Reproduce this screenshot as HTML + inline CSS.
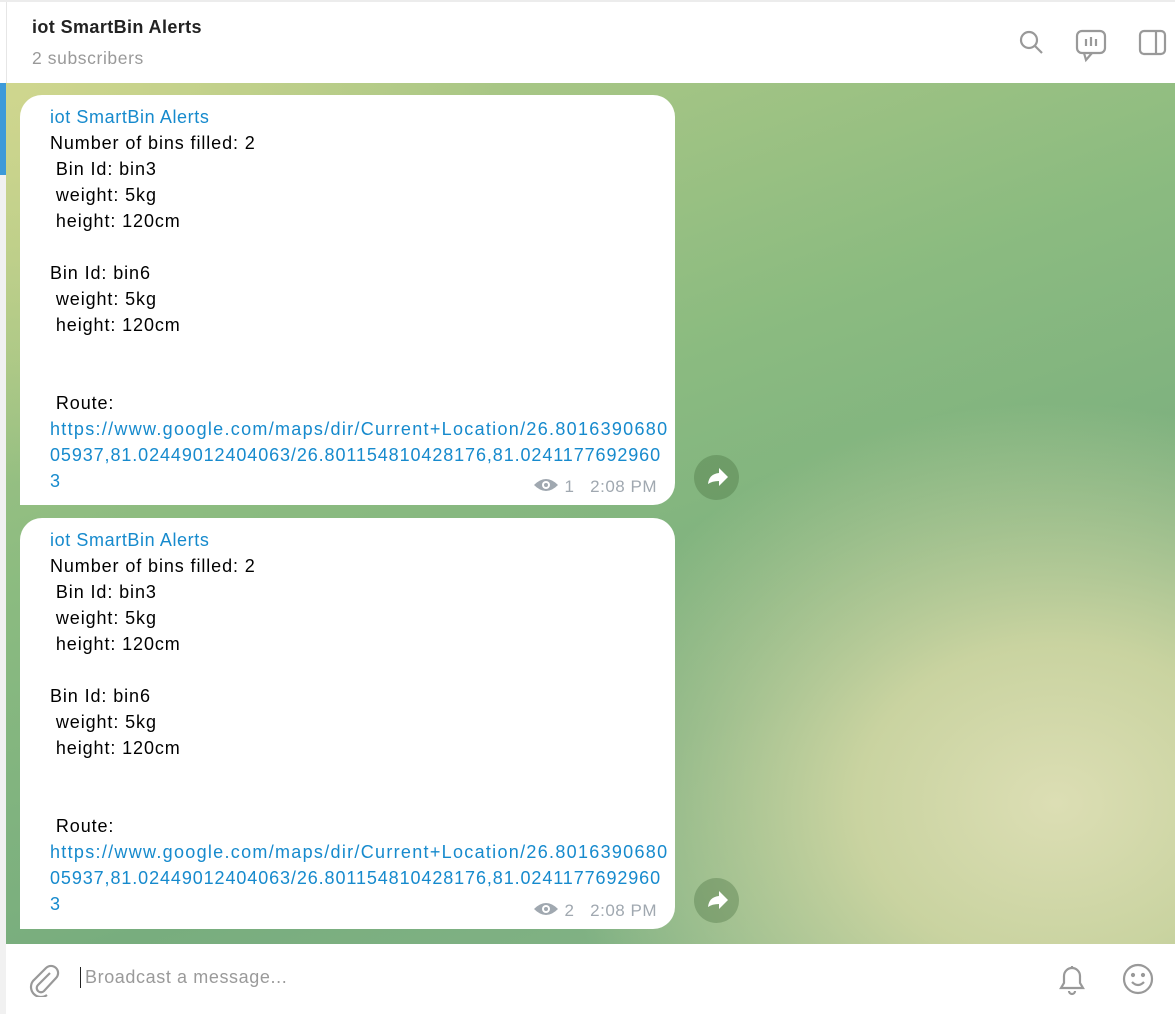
<!DOCTYPE html>
<html><head><style>
body{margin:0;width:1175px;height:1014px;overflow:hidden;font-family:"Liberation Sans",sans-serif;background:#fff;position:relative}
.top{position:absolute;left:0;top:0;width:1175px;height:2px;background:#ececec}
.hdr{position:absolute;left:6px;top:2px;width:1169px;height:81px;background:#fff;border-left:1px solid #e6e6e6}
.t1{position:absolute;left:25px;top:15px;font-size:18px;font-weight:bold;color:#222;letter-spacing:0.4px}
.t2{position:absolute;left:25px;top:46px;font-size:17.5px;color:#999;letter-spacing:0.6px}
.bg{position:absolute;left:6px;top:83px;width:1169px;height:861px;
background:radial-gradient(ellipse 500px 400px at 1050px 720px,#dcdeb4 0%,#c9d3a0 40%,rgba(160,195,140,0) 100%),
radial-gradient(ellipse 500px 400px at 0px 0px,#cfd68e 0%,rgba(180,205,130,0) 100%),
linear-gradient(160deg,#b7cc88 0%,#8bbb80 40%,#78ad7e 70%,#8ab78a 100%)}
.strip{position:absolute;left:0;top:83px;width:6px;height:92px;background:#3d9ad9}
.lstrip{position:absolute;left:0;top:175px;width:6px;height:839px;background:#f1f1f1}
.b{position:absolute;left:20px;width:655px;height:410px;background:#fff;border-radius:22px 22px 22px 0}
.b .in{position:absolute;left:30px;top:9px;font-size:18px;letter-spacing:0.9px;line-height:26px;color:#000;white-space:pre}
.b .n{color:#168acd;font-weight:normal;letter-spacing:0.6px}
.b a{color:#168acd;text-decoration:none}
.b a.l1{letter-spacing:1.3px}
.meta{position:absolute;right:18px;bottom:8px;font-size:17px;color:#a0a8b0;letter-spacing:0.5px}
.fw{position:absolute;left:694px;width:45px;height:45px;border-radius:50%;background:rgba(70,110,60,.35)}
.cmp{position:absolute;left:6px;top:944px;width:1169px;height:70px;background:#fff}
.ph{position:absolute;left:74px;top:23px;font-size:18px;color:#9a9a9a;border-left:1.5px solid #222;padding-left:4px;letter-spacing:0.6px}
</style></head><body>
<div class="top"></div>
<div class="hdr"><div class="t1">iot SmartBin Alerts</div><div class="t2">2 subscribers</div>
<svg style="position:absolute;left:1010px;top:26px" width="30" height="30" fill="none" stroke="#999" stroke-width="2.2"><circle cx="12" cy="12" r="8"/><path d="M18 18l7 7"/></svg>
<svg style="position:absolute;left:1067px;top:26px" width="34" height="36" fill="none" stroke="#999" stroke-width="2.2"><rect x="3" y="3" width="28" height="22" rx="5"/><path d="M10 25l2 7 6-7M12 11v7M17 9v9M22 11v7"/></svg>
<svg style="position:absolute;left:1130px;top:26px" width="30" height="30" fill="none" stroke="#999" stroke-width="2.2"><rect x="3" y="3" width="25" height="23" rx="4"/><path d="M19 3v23"/></svg>
</div>
<div class="strip"></div><div class="lstrip"></div>
<div class="bg"></div>
<div class="b" style="top:95px"><div class="in"><span class="n">iot SmartBin Alerts</span>
Number of bins filled: 2
 Bin Id: bin3
 weight: 5kg
 height: 120cm

Bin Id: bin6
 weight: 5kg
 height: 120cm


 Route:
<a class="l1">https://www.google.com/maps/dir/Current+Location/26.8016390680</a>
<a>05937,81.02449012404063/26.801154810428176,81.0241177692960</a>
<a>3</a></div><div class="meta"><svg width="26" height="18" style="vertical-align:-2px"><path d="M1 9Q13-3 25 9Q13 21 1 9z" fill="#a0a8b0"/><circle cx="13" cy="9" r="4" fill="#fff"/><circle cx="13" cy="9" r="2" fill="#a0a8b0"/></svg> 1&nbsp;&nbsp; 2:08 PM</div></div>
<div class="fw" style="top:455px"><svg width="45" height="45"><path d="M14 29Q15 19 25 18V13l9 9-9 9v-5Q18 26 14 29z" fill="#fff"/></svg></div>
<div class="b" style="top:518px;height:411px"><div class="in"><span class="n">iot SmartBin Alerts</span>
Number of bins filled: 2
 Bin Id: bin3
 weight: 5kg
 height: 120cm

Bin Id: bin6
 weight: 5kg
 height: 120cm


 Route:
<a class="l1">https://www.google.com/maps/dir/Current+Location/26.8016390680</a>
<a>05937,81.02449012404063/26.801154810428176,81.0241177692960</a>
<a>3</a></div><div class="meta"><svg width="26" height="18" style="vertical-align:-2px"><path d="M1 9Q13-3 25 9Q13 21 1 9z" fill="#a0a8b0"/><circle cx="13" cy="9" r="4" fill="#fff"/><circle cx="13" cy="9" r="2" fill="#a0a8b0"/></svg> 2&nbsp;&nbsp; 2:08 PM</div></div>
<div class="fw" style="top:878px"><svg width="45" height="45"><path d="M14 29Q15 19 25 18V13l9 9-9 9v-5Q18 26 14 29z" fill="#fff"/></svg></div>
<div class="cmp">
<svg style="position:absolute;left:20px;top:19px" width="34" height="34" fill="none" stroke="#999" stroke-width="2.2"><path d="M24 10L12 22a4 4 0 006 6L30 15a7 7 0 00-10-10L7 18a10 10 0 0014 14"/></svg>
<div class="ph">Broadcast a message...</div>
<svg style="position:absolute;left:1050px;top:18px" width="32" height="34" fill="none" stroke="#999" stroke-width="2.2"><path d="M5 26h22l-3-5V14a8 8 0 00-16 0v7zM13 29a3 3 0 006 0M16 4v2"/></svg>
<svg style="position:absolute;left:1115px;top:18px" width="34" height="34" fill="none" stroke="#999" stroke-width="2.2"><circle cx="17" cy="17" r="14"/><path d="M11 20q6 6 12 0"/><circle cx="12" cy="13" r="1" fill="#999"/><circle cx="22" cy="13" r="1" fill="#999"/></svg>
</div>
</body></html>
